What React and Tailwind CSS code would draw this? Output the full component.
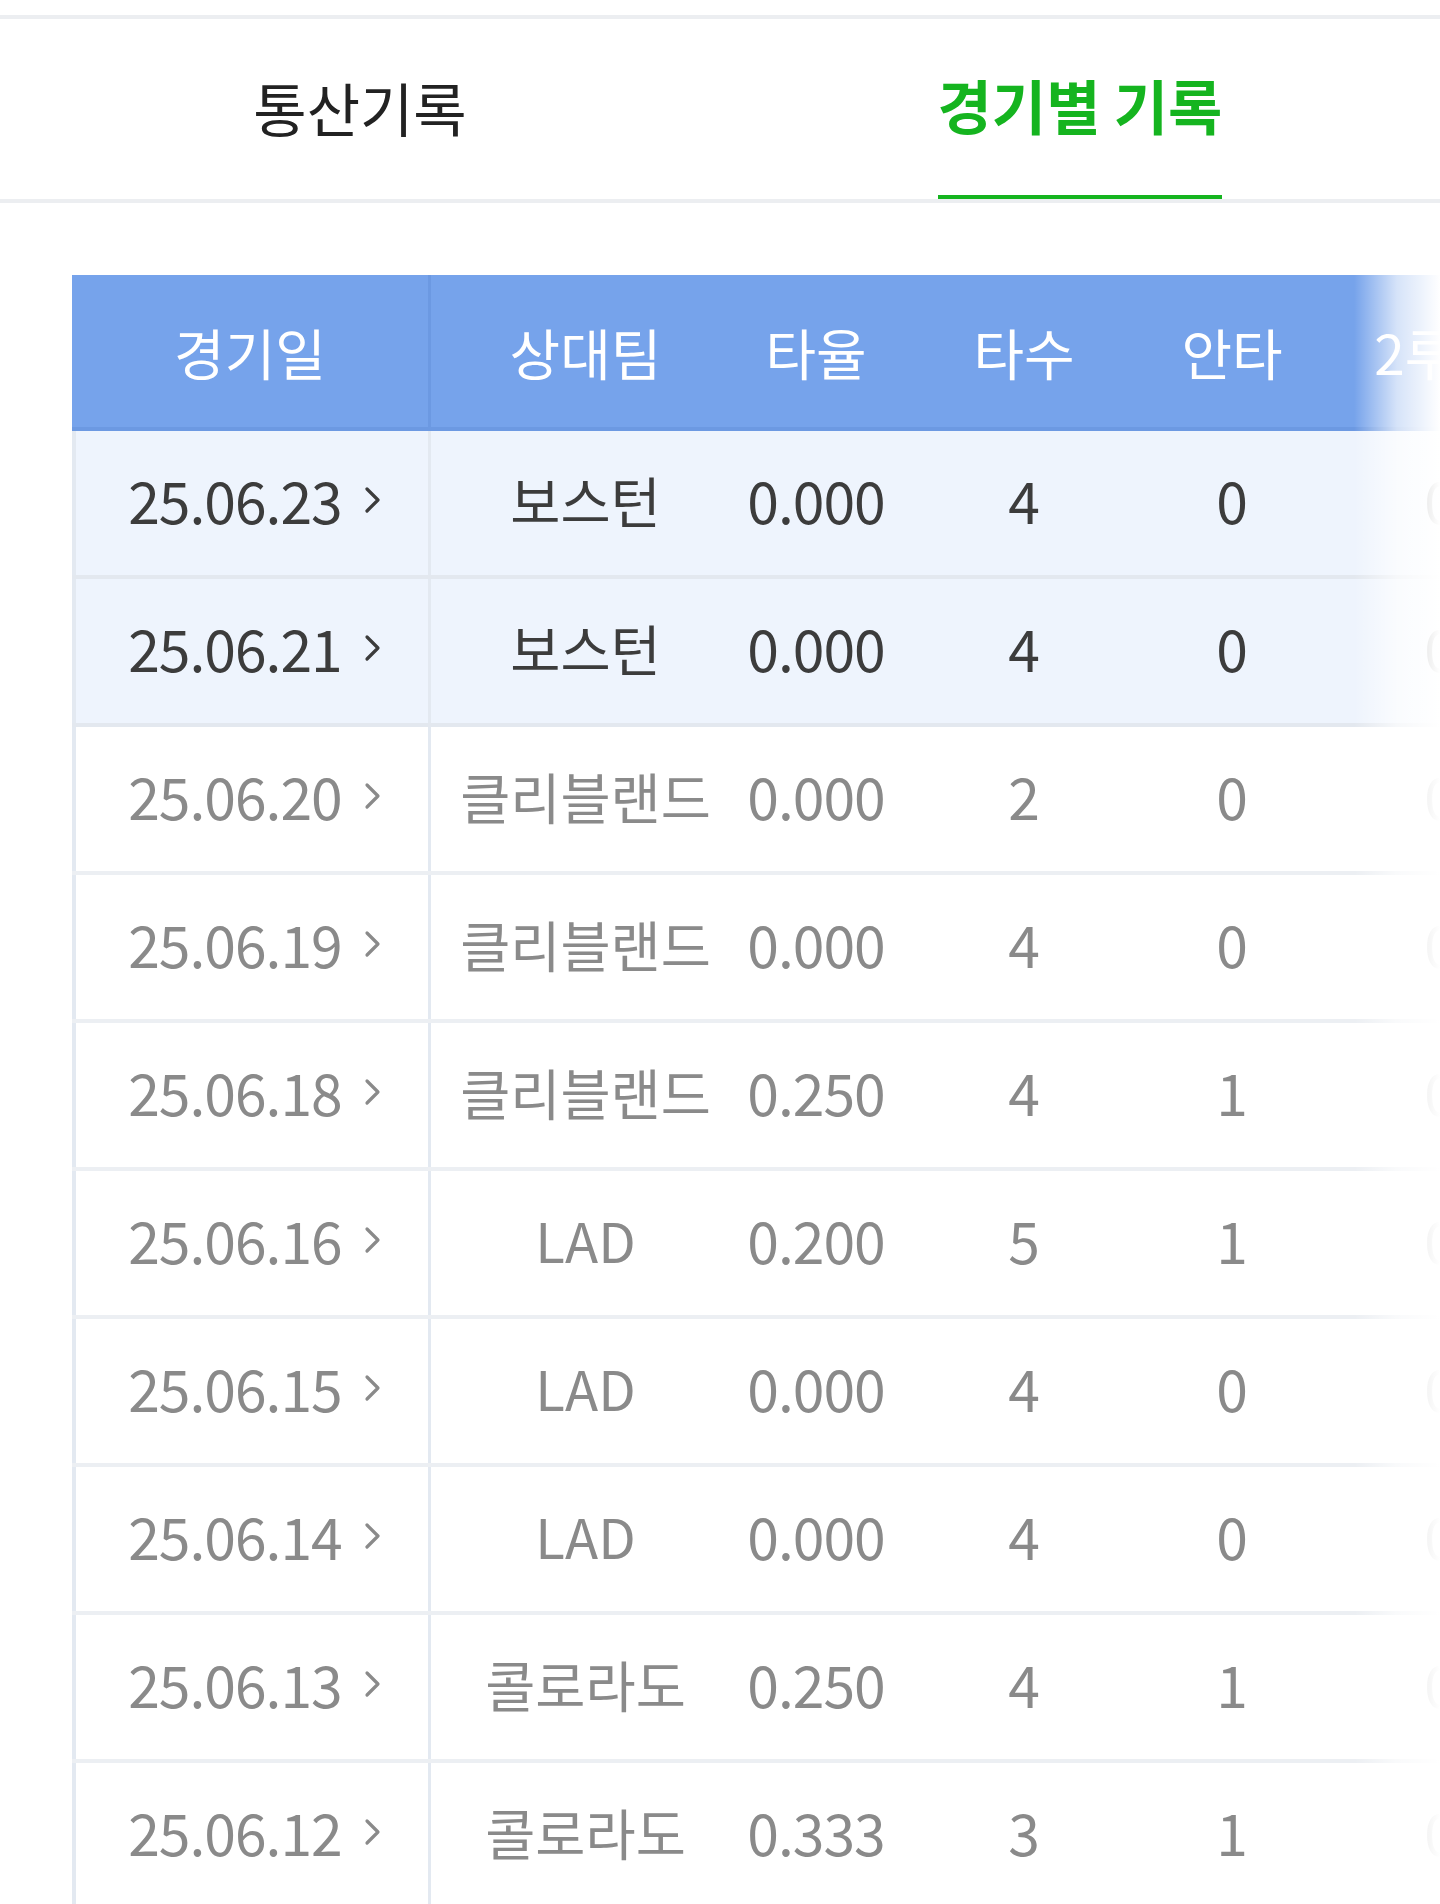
import { useState } from 'react'

const games = [
  { date: '25.06.23', team: '보스턴', avg: '0.000', ab: 4, hit: 0, dbl: 0, active: true },
  { date: '25.06.21', team: '보스턴', avg: '0.000', ab: 4, hit: 0, dbl: 0, active: true },
  { date: '25.06.20', team: '클리블랜드', avg: '0.000', ab: 2, hit: 0, dbl: 0 },
  { date: '25.06.19', team: '클리블랜드', avg: '0.000', ab: 4, hit: 0, dbl: 0 },
  { date: '25.06.18', team: '클리블랜드', avg: '0.250', ab: 4, hit: 1, dbl: 0 },
  { date: '25.06.16', team: 'LAD', avg: '0.200', ab: 5, hit: 1, dbl: 0 },
  { date: '25.06.15', team: 'LAD', avg: '0.000', ab: 4, hit: 0, dbl: 0 },
  { date: '25.06.14', team: 'LAD', avg: '0.000', ab: 4, hit: 0, dbl: 0 },
  { date: '25.06.13', team: '콜로라도', avg: '0.250', ab: 4, hit: 1, dbl: 0 },
  { date: '25.06.12', team: '콜로라도', avg: '0.333', ab: 3, hit: 1, dbl: 0 },
  { date: '25.06.11', team: '콜로라도', avg: '0.000', ab: 4, hit: 0, dbl: 0 },
]

function Chevron() {
  return (
    <svg width="18" height="30" viewBox="0 0 18 30" fill="none" className="shrink-0">
      <path d="M3 4 L14 15 L3 26" stroke="currentColor" strokeWidth="3.2" strokeLinecap="round" strokeLinejoin="round" />
    </svg>
  )
}

function Tabs() {
  const [tab, setTab] = useState(1)
  const items = ['통산기록', '경기별 기록']

  return (
    <div className="flex border-b-4 border-[#eceef1]">
      {items.map((label, i) => (
        <button key={label} onClick={() => setTab(i)} className="flex-1 flex justify-center">
          <span
            className={
              i === tab
                ? 'h-[180px] flex items-center text-[59px] font-bold text-[#15b41f] border-b-4 border-[#15b41f] -mb-[4px] pb-[4px]'
                : 'h-[180px] flex items-center text-[58px] text-[#222222] pb-[4px]'
            }>
            {label}
          </span>
        </button>
      ))}
    </div>
  )
}

export default function App() {
  return (
    <div
      className="w-[1440px] h-[1904px] overflow-hidden bg-white"
      style={{ fontFamily: '"Noto Sans CJK KR", "Noto Sans", sans-serif' }}>
      <div className="h-[15px]" />
      <div className="border-t-4 border-[#eceef1]">
        <Tabs />
      </div>

      <div className="relative mt-[72px] ml-[72px] overflow-hidden">
        {/* header */}
        <div className="flex w-[1500px] h-[156px] bg-[#76a3eb] border-b-4 border-[#6c99e2] text-white text-[55px]">
          <div className="w-[359px] shrink-0 flex items-center justify-center border-r-[3px] border-[#6c99e2]">경기일</div>
          <div className="w-[281px] shrink-0 flex items-center justify-center pl-[28px]">상대팀</div>
          <div className="w-[208px] shrink-0 flex items-center justify-center">타율</div>
          <div className="w-[208px] shrink-0 flex items-center justify-center">타수</div>
          <div className="w-[208px] shrink-0 flex items-center justify-center">안타</div>
          <div className="w-[208px] shrink-0 flex items-center justify-center">2루타</div>
        </div>

        {games.map((g) => (
          <div
            key={g.date}
            className={
              g.active
                ? 'flex w-[1500px] h-[148px] border-b-4 border-[#e3e8ef] bg-[#eef4fd] text-[#3c3c3c]'
                : 'flex w-[1500px] h-[148px] border-b-4 border-[#eceff3] bg-white text-[#8a8a8a]'
            }>
            <div className="w-[359px] shrink-0 flex items-center justify-center gap-[22px] pb-[6px] border-l-4 border-r-[3px] border-[#e3e9f1] text-[57px] tracking-[-1px] pl-[6px]">
              <span>{g.date}</span>
              <Chevron />
            </div>
            <div className="w-[281px] shrink-0 flex items-center justify-center pb-[6px] pl-[28px] text-[54.5px] whitespace-nowrap">
              {g.team}
            </div>
            <div className="w-[208px] shrink-0 flex items-center justify-center pb-[6px] text-[57px] tracking-[-1px]">{g.avg}</div>
            <div className="w-[208px] shrink-0 flex items-center justify-center pb-[6px] text-[57px]">{g.ab}</div>
            <div className="w-[208px] shrink-0 flex items-center justify-center pb-[6px] text-[57px]">{g.hit}</div>
            <div className="w-[208px] shrink-0 flex items-center justify-center pb-[6px] text-[57px]">{g.dbl}</div>
          </div>
        ))}

        {/* right edge fade */}
        <div className="absolute top-0 bottom-0 right-0 w-[86px] bg-gradient-to-r from-white/0 via-white/70 to-white" />
      </div>
    </div>
  )
}
